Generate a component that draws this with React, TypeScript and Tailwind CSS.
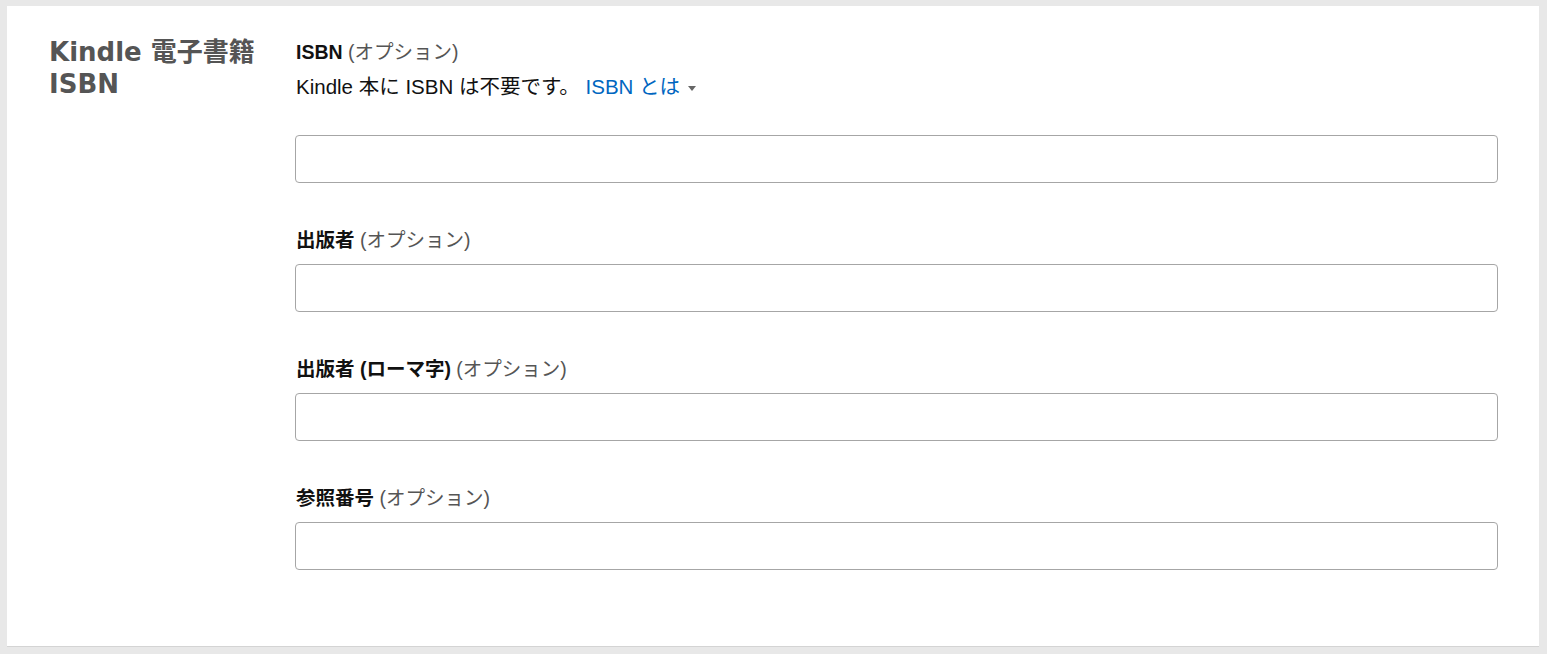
const font = { fontFamily: '"Liberation Sans", "Noto Sans CJK JP", Arial, sans-serif' };
const titleFont = { fontFamily: '"DejaVu Sans", "Noto Sans CJK JP", Verdana, sans-serif' };

const inputCls =
  "-ml-px h-[48px] w-[calc(100%+1px)] rounded-[4px] border border-[#a6a6a6] bg-white px-3 outline-none";

const Field = ({ label }: { label: React.ReactNode }) => {
  return (
    <div className="flex flex-col">
      <div className="text-[19.5px] leading-[24px] text-[#111]">
        <span className="font-bold">{label}</span>{" "}
        <span className="text-[#555]">(オプション)</span>
      </div>
      <input type="text" className={`mt-[12px] ${inputCls}`} />
    </div>
  );
};

export default function App() {
  return (
    <div className="min-h-[654px] w-full bg-[#e8e8e8] pt-[6px] pl-[7px]" style={font}>
      <div className="flex h-[640px] w-[1532px] bg-white pl-[42px] pr-[41px] shadow-[0_1px_0_#d4d4d4]">
        <div className="w-[247px] shrink-0 pt-[30px]">
          <h2 className="text-[26px] font-bold leading-[32px] text-[#555]" style={titleFont}>
            Kindle 電子書籍
            <br />
            ISBN
          </h2>
        </div>
        <div className="flex flex-1 flex-col gap-[45px] pt-[34px]">
          <div className="flex flex-col">
            <div className="text-[19.5px] leading-[24px] text-[#111]">
              <span className="font-bold">ISBN</span> <span className="text-[#555]">(オプション)</span>
            </div>
            <div className="mt-[11px] text-[20.5px] leading-[24px] text-[#111]">
              Kindle 本に ISBN は不要です。{" "}
              <span className="text-[#0066c0]">ISBN とは</span>
              <span className="ml-[8px] inline-block h-0 w-0 border-x-[4.5px] border-t-[5px] border-x-transparent border-t-[#666] align-middle" />
            </div>
            <input type="text" className={`mt-[36px] ${inputCls}`} />
          </div>
          <Field label="出版者" />
          <Field label="出版者 (ローマ字)" />
          <Field label="参照番号" />
        </div>
      </div>
    </div>
  );
}
